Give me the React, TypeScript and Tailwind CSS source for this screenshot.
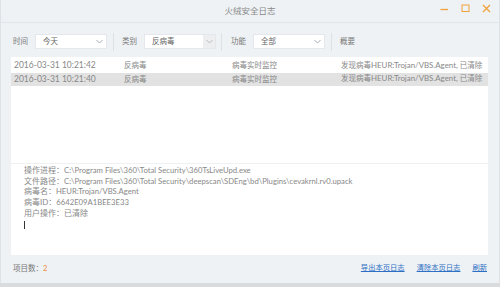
const font = { fontFamily: 'Lato, "Noto Sans CJK SC", sans-serif' };

function Chevron({ color = '#9aa3ab' }: { color?: string }) {
  return (
    <svg width="7" height="5" viewBox="0 0 7 5" fill="none">
      <path d="M0.5 1 L3.5 4 L6.5 1" stroke={color} strokeWidth="0.9" />
    </svg>
  );
}

function Select({ label, value, disabled }: { label: string; value: string; disabled?: boolean }) {
  return (
    <div className="flex items-center">
      <span className="text-[7.5px] text-[#777] w-[22px]">{label}</span>
      <div className="flex items-center w-[72px] h-[15px] bg-white border border-[#e4e8ec]">
        <span className="flex-1 pl-[7px] text-[7.5px] text-[#666]">{value}</span>
        {disabled ? (
          <span className="w-[12px] h-full flex items-center justify-center bg-[#eceef0]">
            <Chevron color="#b5b9bd" />
          </span>
        ) : (
          <span className="w-[14px] flex items-center justify-center">
            <Chevron />
          </span>
        )}
      </div>
    </div>
  );
}

const rows = [
  ['2016-03-31 10:21:42', '反病毒', '病毒实时监控'],
  ['2016-03-31 10:21:40', '反病毒', '病毒实时监控'],
];

// label in CJK size, value in a slightly smaller latin size
const details: [string, string][] = [
  ['操作进程：', 'C:\\Program Files\\360\\Total Security\\360TsLiveUpd.exe'],
  ['文件路径：', 'C:\\Program Files\\360\\Total Security\\deepscan\\SDEng\\bd\\Plugins\\cevakrnl.rv0.upack'],
  ['病毒名：', 'HEUR:Trojan/VBS.Agent'],
  ['病毒ID：', '6642E09A1BEE3E33'],
  ['用户操作：', ''],
];

export default function App() {
  return (
    <div className="w-[500px] h-[287px] bg-[#eef2f5] flex flex-col overflow-hidden" style={font}>
      <div className="flex-1 flex flex-col border-l border-r border-[#dde2e6]">
        {/* title bar */}
        <div className="h-[23px] flex items-center relative border-b border-[#e2e6ea]">
          <div className="flex-1 text-center text-[8.5px] text-[#888] pt-[1px]">火绒安全日志</div>
          <div className="absolute right-[8px] top-[4px] flex items-center gap-[12px]">
            <svg width="9" height="9" viewBox="0 0 9 9">
              <path d="M0.5 5.5 H8" stroke="#f0a23a" strokeWidth="1.3" />
            </svg>
            <svg width="9" height="9" viewBox="0 0 9 9">
              <rect x="1" y="1" width="7" height="6.5" fill="none" stroke="#f0a23a" strokeWidth="1" />
            </svg>
            <svg width="9" height="9" viewBox="0 0 9 9">
              <path d="M1 1 L8 8 M8 1 L1 8" stroke="#f0a23a" strokeWidth="1.3" />
            </svg>
          </div>
        </div>

        {/* toolbar */}
        <div className="flex items-center h-[31px] pl-[12px] mt-[3px]">
          <Select label="时间" value="今天" />
          <div className="w-px h-[18px] bg-[#dde1e5] ml-[6px] mr-[8px]" />
          <Select label="类别" value="反病毒" disabled />
          <div className="w-px h-[18px] bg-[#dde1e5] ml-[5px] mr-[9px]" />
          <Select label="功能" value="全部" />
          <div className="w-px h-[18px] bg-[#dde1e5] ml-[6px] mr-[8px]" />
          <span className="text-[7.5px] text-[#777]">概要</span>
        </div>

        {/* main panel */}
        <div className="mx-[10px] mr-[11px] h-[198px] bg-white flex flex-col pt-[2px]">
          {rows.map((r, i) => (
            <div
              key={i}
              className={`flex items-center h-[13.5px] text-[7.5px] text-[#888] whitespace-nowrap ${i === 1 ? 'bg-[#e2e2e2]' : ''}`}
            >
              <span className="w-[113px] pl-[3px] text-[8.5px]">{r[0]}</span>
              <span className="w-[108px]">{r[1]}</span>
              <span className="w-[109px]">{r[2]}</span>
              <span>
                发现病毒<span className="text-[7.9px]">HEUR:Trojan/VBS.Agent, </span>已清除
              </span>
            </div>
          ))}
          <div className="h-[77px]" />
          <div className="h-px bg-[#eef0f2]" />
          <div className="pl-[13px] pt-[1px] flex flex-col">
            {details.map(([k, v], i) => (
              <div key={i} className="text-[8px] leading-[10.7px] text-[#888] whitespace-nowrap">
                {k}
                {v ? <span className="text-[7.7px]">{v}</span> : '已清除'}
              </div>
            ))}
            <div className="w-px h-[8px] bg-[#333] mt-[2px]" />
          </div>
        </div>

        {/* footer */}
        <div className="flex items-center h-[27px] pl-[12px] pr-[12px]">
          <span className="text-[7.5px] text-[#777]">
            项目数：<span className="text-[#f08a3a]">2</span>
          </span>
          <div className="flex-1" />
          <div className="flex items-center gap-[12px] text-[7.3px] text-[#2d6fc4] underline">
            <span>导出本页日志</span>
            <span>清除本页日志</span>
            <span>刷新</span>
          </div>
        </div>
      </div>
      <div className="h-[4px] bg-[#d9dcdf]" />
    </div>
  );
}
